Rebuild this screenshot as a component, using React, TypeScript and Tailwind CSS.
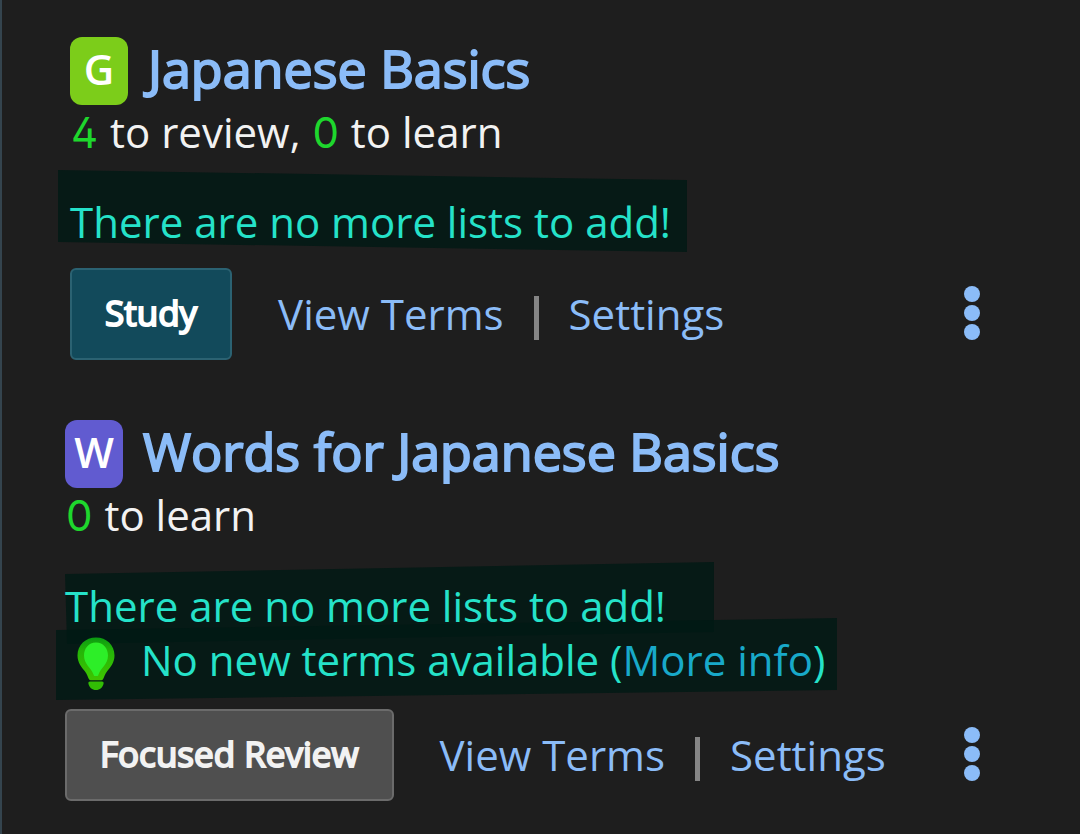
import { ReactNode } from "react";

interface DeckHeaderProps {
	letter: string;
	title: string;
	badgeClass: string;
}

function DeckHeader({ letter, title, badgeClass }: DeckHeaderProps) {
	return (
		<div className="flex items-center gap-5">
			<span
				className={`flex h-[68px] w-[58px] shrink-0 justify-center rounded-xl text-[42px] leading-[64px] font-semibold text-white ${badgeClass}`}
			>
				{letter}
			</span>
			<h2 className="pb-1.5 text-[52px] leading-[62px] text-[#8bbcf8] [-webkit-text-stroke:2px_#8bbcf8]">
				<a href="#">{title}</a>
			</h2>
		</div>
	);
}

function Count({ value }: { value: number }) {
	return (
		<span className="px-px font-['Inter'] text-[#1ed72d] [font-feature-settings:'cv02']">
			{value}
		</span>
	);
}

interface DeckActionsProps {
	label: string;
	buttonClass: string;
}

function DeckActions({ label, buttonClass }: DeckActionsProps) {
	return (
		<div className="flex items-center">
			<button
				className={`h-[92px] rounded-md border-2 px-[33px] pb-0.5 text-[35px] [-webkit-text-stroke:2px_currentColor] ${buttonClass}`}
			>
				{label}
			</button>
			<nav className="ml-[46px] flex items-center text-[#8bbcf8]">
				<a href="#">View Terms</a>
				<span className="mx-[30px] mt-2 h-11 w-[5px] bg-[#858585]" />
				<a href="#">Settings</a>
			</nav>
			<button
				aria-label="More options"
				className="mb-0.5 ml-auto flex flex-col gap-[3px]"
			>
				<span className="size-4 rounded-full bg-[#8bbcf8]" />
				<span className="size-4 rounded-full bg-[#8bbcf8]" />
				<span className="size-4 rounded-full bg-[#8bbcf8]" />
			</button>
		</div>
	);
}

// notice line on a slanted strip of dark marker
function Marked({ className, children }: { className: string; children: ReactNode }) {
	return (
		<p
			className={`relative w-fit text-[#25e2c9] before:absolute before:inset-0 before:-z-10 before:bg-[#001914]/80 ${className}`}
		>
			{children}
		</p>
	);
}

function Bulb() {
	return (
		<svg viewBox="0 0 38 54" className="mt-2 h-[54px] w-[38px]" aria-hidden="true">
			<defs>
				<linearGradient id="bulb" x1="0" y1="0" x2="0" y2="1">
					<stop offset="0" stopColor="#0a9a12" />
					<stop offset="0.3" stopColor="#24b408" />
					<stop offset="1" stopColor="#3fc400" />
				</linearGradient>
			</defs>
			<path
				d="M19 .5C8.500.5.500 8 .5 18.500c0 7 4 11.500 7.200 15.500 2.300 3 3.300 6.500 4.300 8.300.4.700 1 1 1.700 1h10.600c.7 0 1.300-.3 1.700-1 1-1.800 2-5.300 4.300-8.300 3.200-4 7.200-8.500 7.200-15.500C37.500 8 29.500.5 19 .5Z"
				fill="url(#bulb)"
			/>
			<path
				d="M19 5.500C11.500 5.500 7 11.500 7 18.500c0 9 7 12 9.500 19 .3 1 .8 1.500 1.500 1.500h2c.7 0 1.200-.5 1.500-1.500C24 30.500 31 27.500 31 18.500c0-7-4.500-13-12-13Z"
				fill="#2dee28"
			/>
			<path
				d="M13 44.500h12c1.200 0 1.800.8 1.600 2-.6 3.800-3.800 6.500-7.600 6.500s-7-2.700-7.600-6.500c-.2-1.200.4-2 1.600-2Z"
				fill="#32bd05"
			/>
		</svg>
	);
}

export default function App() {
	return (
		<main className="isolate min-h-screen border-l-2 border-[#34444e] bg-[#1e1e1e] pt-[37px] pr-[100px] pb-8 font-['Open_Sans',sans-serif] text-[42px] leading-[54px] text-[#f2f2f2]">
			<section className="pl-[68px]">
				<DeckHeader letter="G" title="Japanese Basics" badgeClass="bg-[#7ccd1a]" />
				<p>
					<Count value={4} /> to review, <Count value={0} /> to learn
				</p>
				<Marked className="-ml-3 mt-2.5 pt-[25px] pr-4 pb-[3px] pl-3 before:[clip-path:polygon(0_0,100%_10px,100%_100%,0_72px)]">
					There are no more lists to add!
				</Marked>
				<div className="mt-4">
					<DeckActions
						label="Study"
						buttonClass="border-[#2b6272] bg-[#124a5b] text-white"
					/>
				</div>
			</section>

			<section className="mt-[60px] pl-[63px]">
				<DeckHeader
					letter="W"
					title="Words for Japanese Basics"
					badgeClass="bg-[#615bd0]"
				/>
				<p>
					<Count value={0} /> to learn
				</p>
				<Marked className="mt-[19px] pt-[17px] pr-12 pb-[11px] before:[clip-path:polygon(0_12px,100%_0,100%_70px,2px_100%)]">
					There are no more lists to add!
				</Marked>
				<Marked className="-ml-[9px] -mt-[26px] flex items-center pt-[11px] pr-3 pb-[9px] pl-[21px] before:[clip-path:polygon(0_12px,100%_0,100%_72px,0_100%)]">
					<Bulb />
					<span className="ml-[26px]">
						No new terms available (
						<a href="#" className="text-[#18a9c9]">
							More info
						</a>
						)
					</span>
				</Marked>
				<div className="mt-[9px]">
					<DeckActions
						label="Focused Review"
						buttonClass="border-[#6b6b6b] bg-[#4f4f4f] text-[#f2f2f2]"
					/>
				</div>
			</section>
		</main>
	);
}
